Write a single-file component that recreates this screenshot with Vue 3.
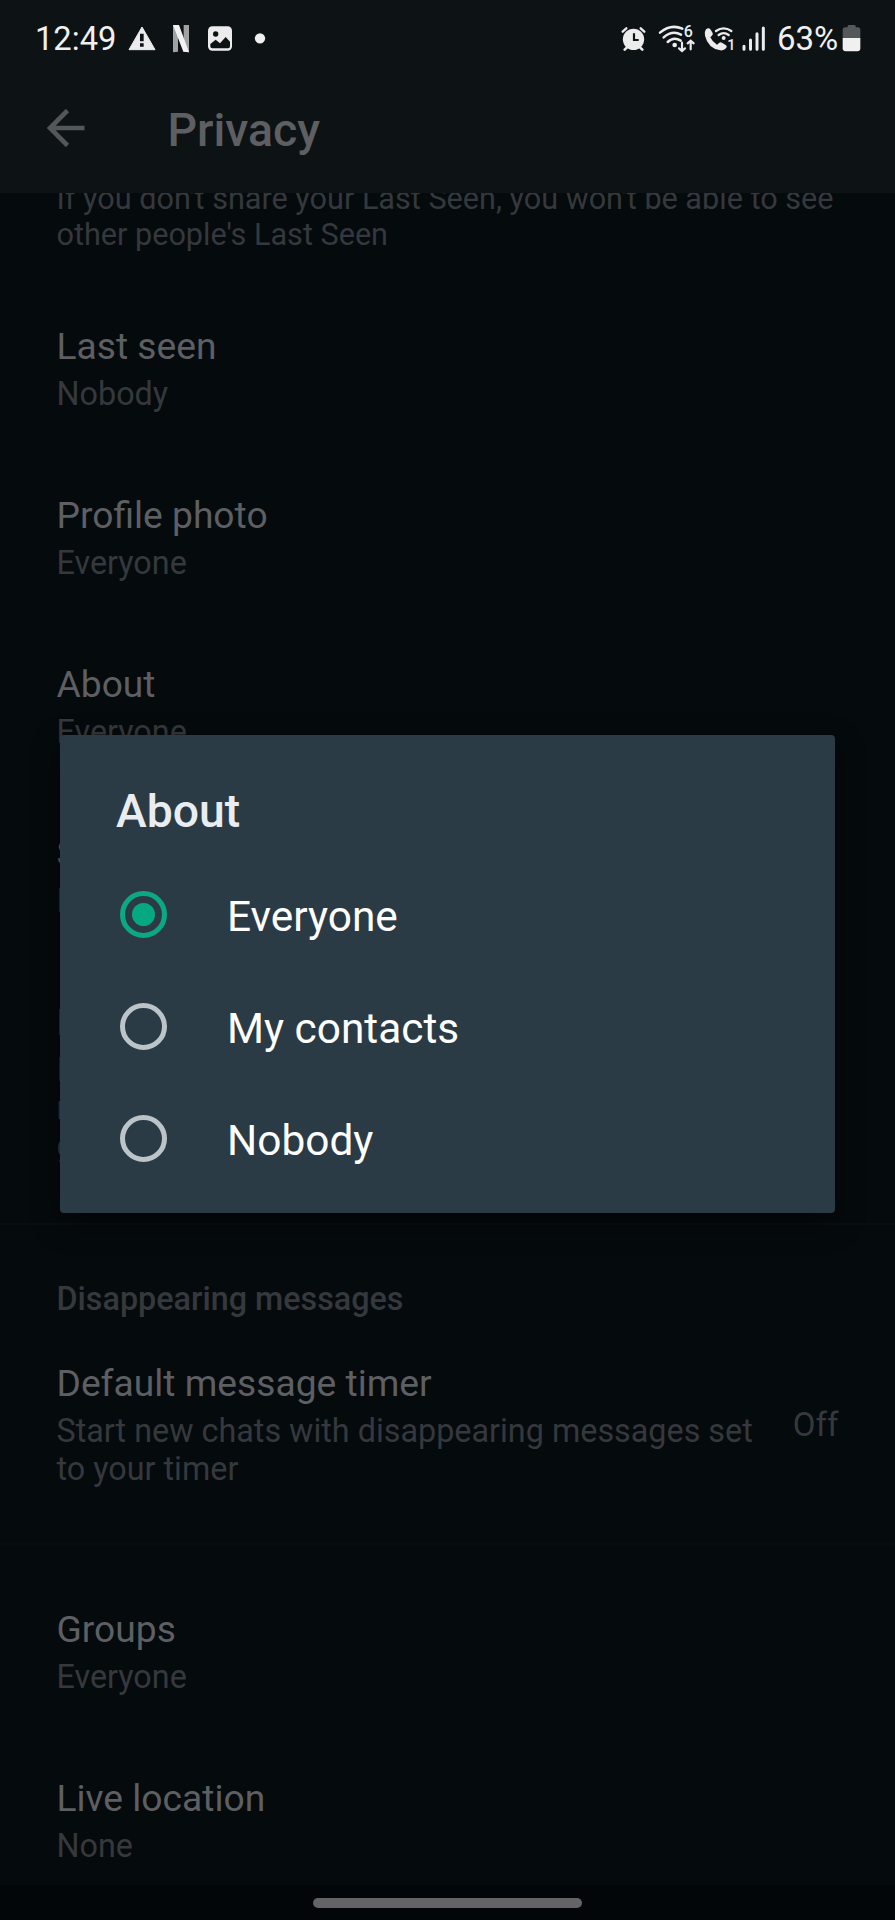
<script setup>
const rows = [
  { title: 'Last seen', value: 'Nobody' },
  { title: 'Profile photo', value: 'Everyone' },
  { title: 'About', value: 'Everyone' },
  { title: 'Status', value: 'My contacts' },
]
const lowerRows = [
  { title: 'Groups', value: 'Everyone' },
  { title: 'Live location', value: 'None' },
]
const options = [
  { label: 'Everyone', checked: true },
  { label: 'My contacts', checked: false },
  { label: 'Nobody', checked: false },
]
</script>

<template>
  <div class="screen">
    <header class="top">
      <div class="status">
        <span class="time">12:49</span>
        <svg class="i32" viewBox="378 0 96 240">
          <path d="M426 81 465 149H387Z" fill="#ececec" stroke="#ececec" stroke-width="3" stroke-linejoin="round" />
          <path d="M420 101h11v23h-11zM420 130h11v10h-11z" fill="#0d1214" />
        </svg>
        <svg class="i42" viewBox="474 0 126 240">
          <path d="M519 75h15v80q-8 0-15 2zM551 75h16v82q-8-2-16-2z" fill="#a0a2a3" />
          <path d="M519 75h18l30 82q-8-2-17-2z" fill="#f2f2f2" />
        </svg>
        <svg class="i40" viewBox="600 0 120 240">
          <rect x="624" y="79" width="72" height="73" rx="13" fill="#ececec" />
          <circle cx="647" cy="102" r="8" fill="#0d1214" />
          <path d="M631 132l16-13 13 11 17-19 13 14v14q0 6-6 6h-47q-6 0-6-6z" fill="#0d1214" />
        </svg>
        <svg class="i40" viewBox="720 0 120 240">
          <circle cx="780" cy="115" r="15.5" fill="#f0f0f0" />
        </svg>
        <span class="spacer"></span>
        <svg class="i40" viewBox="60 0 120 240">
          <g stroke="#ececec" stroke-linecap="round" fill="none">
            <path d="M83 95l11-10M148 95l-11-10" stroke-width="7" />
            <path d="M89 149l7-7M142 149l-7-7" stroke-width="8" />
          </g>
          <circle cx="115.500" cy="118" r="32" fill="#ececec" />
          <path d="M117 100v20h14" fill="none" stroke="#0d1214" stroke-width="6.500" />
        </svg>
        <svg class="i45" viewBox="180 0 135 240">
          <g fill="none" stroke="#ececec" stroke-width="7.500" stroke-linecap="round">
            <path d="M195 98q32-27 67-12" />
            <path d="M206 112q26-22 52-8" />
            <path d="M218 126q18-17 39-4" />
            <path d="M261 128v24M252 145l9 8 9-8M287 148v-25M278 130l9-8 9 8" stroke-width="6.500" />
          </g>
          <circle cx="239" cy="135" r="7" fill="#ececec" />
          <text x="266" y="112" class="glyph six">6</text>
        </svg>
        <svg class="i38" viewBox="315 0 114 240">
          <path d="M333 88q8-7 13 0l7 11q2 5-3 9l-4 4q6 14 20 22l6-5q4-4 9-1l11 7q6 4 1 10-6 7-17 6-37-6-46-44-2-13 3-19z" fill="#ececec" />
          <g fill="none" stroke="#ececec" stroke-width="7" stroke-linecap="round">
            <path d="M363 93q23-16 46 0" />
            <path d="M371 105q15-11 30 0" />
          </g>
          <circle cx="386" cy="114" r="6" fill="#ececec" />
          <text x="397" y="151" class="glyph one">1</text>
        </svg>
        <svg class="i35" viewBox="429 0 105 240">
          <path d="M447 139v9M466.500 120v28M486 101v47M505 84v64" stroke="#ececec" stroke-width="9" stroke-linecap="round" />
        </svg>
        <span class="percent">63%</span>
        <svg class="i24" viewBox="738 0 72 240">
          <path d="M758 79q0-4 4-4h16q4 0 4 4v3h6q8 0 8 8v24h-53V90q0-8 8-8h7z" fill="#55585a" />
          <path d="M743 114h53v31q0 9-9 9h-35q-9 0-9-9z" fill="#f0f0f0" />
        </svg>
      </div>
      <div class="bar">
        <svg class="back" viewBox="0 0 38 38">
          <path d="M37.500 19H3M20.500 1.500 3 19l17.500 17.500" fill="none" stroke="#54575a" stroke-width="4.600" />
        </svg>
        <h1>Privacy</h1>
      </div>
    </header>

    <main class="content">
      <p class="hint">If you don't share your Last Seen, you won't be able to see<br />other people's Last Seen</p>
      <section>
        <div v-for="row in rows" :key="row.title" class="row">
          <div class="title">{{ row.title }}</div>
          <div class="value">{{ row.value }}</div>
        </div>
        <div class="receipts">
          <div class="title">Read receipts</div>
          <div class="value">If turned off, you won't send or receive<br />read receipts. Read receipts are always sent for<br />group chats.</div>
        </div>
      </section>
      <section class="timer">
        <h2>Disappearing messages</h2>
        <div class="timer-row">
          <div>
            <div class="title">Default message timer</div>
            <div class="value">Start new chats with disappearing messages set<br />to your timer</div>
          </div>
          <span class="off">Off</span>
        </div>
      </section>
      <section class="lower">
        <div v-for="row in lowerRows" :key="row.title" class="row">
          <div class="title">{{ row.title }}</div>
          <div class="value">{{ row.value }}</div>
        </div>
      </section>
    </main>

    <footer class="nav"><span class="pill"></span></footer>

    <div class="dialog" role="dialog">
      <h3>About</h3>
      <div v-for="o in options" :key="o.label" class="option">
        <span class="radio" :class="{ on: o.checked }"></span>
        <span class="label">{{ o.label }}</span>
      </div>
    </div>
  </div>
</template>

<style>
body {
  background: #050a0d;
}
</style>

<style scoped>
.screen {
  position: relative;
  width: 895px;
  height: 1920px;
  overflow: hidden;
  display: flex;
  flex-direction: column;
  background: #050a0d;
  font-family: Roboto, "Liberation Sans", sans-serif;
}
h1, h2, h3, p {
  margin: 0;
  font-weight: 500;
}
.top {
  flex: none;
  height: 193px;
  background: #0d1215;
  z-index: 1;
}
.status {
  height: 80px;
  display: flex;
  align-items: center;
  padding-right: 30px;
  color: #f0f0f0;
  font-size: 33px;
  line-height: 77px;
}
.status svg {
  flex: none;
  height: 80px;
}
.time {
  width: 91px;
  padding-left: 35px;
  height: 80px;
  font-size: 32.700px;
  line-height: 78px;
}
.percent {
  width: 64px;
  padding-left: 4px;
  height: 80px;
  white-space: nowrap;
}
.spacer { flex: 1; }
.i24 { width: 24px; }
.i32 { width: 32px; }
.i35 { width: 35px; }
.i38 { width: 38px; }
.i40 { width: 40px; }
.i42 { width: 42px; }
.i45 { width: 45px; }
.glyph {
  fill: #ececec;
  font-family: Roboto, sans-serif;
  font-weight: 500;
}
.six { font-size: 48px; }
.one { font-size: 43px; }
.bar {
  height: 96px;
  display: flex;
  align-items: center;
  padding-left: 47px;
}
.back {
  width: 38px;
  height: 38px;
}
.bar h1 {
  margin-left: 82.500px;
  padding-top: 4px;
  font-size: 46.400px;
  line-height: 56px;
  color: #5d5f62;
}
.content {
  flex: 1;
  min-height: 0;
  margin-top: -12px;
}
.hint {
  padding: 0 56.500px;
  font-size: 30.600px;
  font-weight: 400;
  line-height: 35.500px;
  color: #35383c;
  white-space: nowrap;
  margin-bottom: 72px;
}
.row {
  height: 169px;
  padding: 0 56.500px;
}
.title {
  font-size: 37.200px;
  line-height: 44px;
  color: #5d5f62;
}
.value {
  margin-top: 7px;
  font-size: 32.350px;
  line-height: 38px;
  color: #35383c;
  white-space: nowrap;
}
.receipts {
  height: 223px;
  padding: 0 56.500px;
}
.timer {
  height: 322px;
  box-sizing: border-box;
  padding: 55px 56.500px 0;
  border-top: 2px solid #090e11;
  border-bottom: 2px solid #070c0f;
}
.timer h2 {
  font-size: 32.350px;
  line-height: 38px;
  color: #35383c;
}
.timer-row {
  margin-top: 43px;
  display: flex;
  justify-content: space-between;
}
.off {
  margin-top: 45px;
  font-size: 33px;
  line-height: 38px;
  color: #35383c;
}
.lower {
  padding-top: 61.500px;
}
.nav {
  flex: none;
  height: 35px;
  background: #020609;
  display: flex;
  justify-content: center;
  z-index: 1;
}
.pill {
  width: 269px;
  height: 10px;
  margin-top: 13px;
  border-radius: 5px;
  background: #646466;
}
.dialog {
  position: absolute;
  left: 59.500px;
  top: 734.500px;
  width: 775.500px;
  height: 478.500px;
  border-radius: 4px;
  background: #2b3b45;
  box-shadow: 0 10px 30px rgba(0, 0, 0, 0.45);
  z-index: 2;
}
.dialog h3 {
  margin: 48.500px 0 19px 56.500px;
  font-size: 46.300px;
  line-height: 56px;
  color: #e9edf1;
}
.option {
  height: 112px;
  display: flex;
  align-items: center;
  padding-left: 60.500px;
}
.radio {
  width: 47px;
  height: 47px;
  box-sizing: border-box;
  border: 5px solid #bdc4c9;
  border-radius: 50%;
  display: flex;
  align-items: center;
  justify-content: center;
}
.radio.on {
  border-color: #0ca884;
}
.radio.on::after {
  content: "";
  width: 23px;
  height: 23px;
  border-radius: 50%;
  background: #06a884;
}
.label {
  margin-left: 60px;
  padding-top: 5px;
  font-size: 42.400px;
  line-height: 50px;
  color: #fff;
}
</style>
